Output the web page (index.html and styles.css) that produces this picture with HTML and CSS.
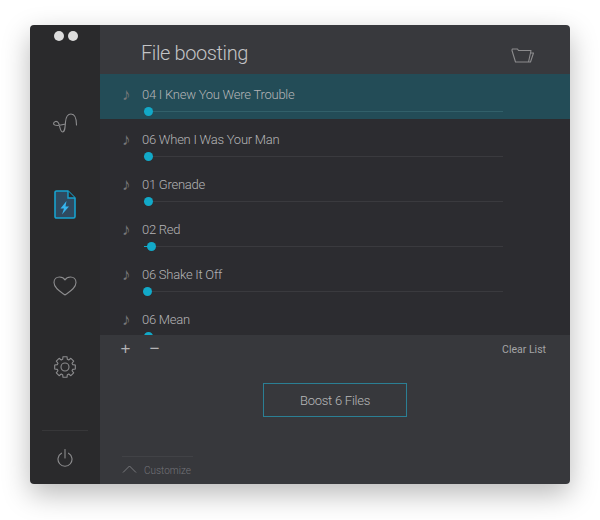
FILE: index.html
```html
<!DOCTYPE html>
<html lang="en">
<head>
    <meta charset="UTF-8">
    <title>File boosting</title>
    <link rel="stylesheet" href="styles.css">
</head>
<body>
    <div class="window">
        <aside class="sidebar">
            <div class="dots"><span class="dot"></span><span class="dot"></span></div>
            <nav class="nav">
                <div class="nav-item">
                    <svg class="icon" width="26" height="22" viewBox="0 0 26 22"><path d="M1.5 11C1.5 8 5 7.5 6.5 10C8 13 8 19 10.5 19C13 19 13 15 13.5 9C14 3 16 1 19 1C22.5 1 24.5 5 24.5 12M1.5 11C3 13.5 8 12.5 13.5 11"/></svg>
                </div>
                <div class="nav-item">
                    <svg class="doc" width="22" height="29" viewBox="0 0 22 29">
                        <path class="doc-body" d="M2.5 1H14L21 8V26.5C21 27.4 20.4 28 19.5 28H2.5C1.6 28 1 27.4 1 26.5V2.5C1 1.6 1.6 1 2.5 1Z"/>
                        <path class="doc-fold" d="M14 1V8H21"/>
                        <path class="doc-bolt" d="M12.5 11L6.5 18.5H10L8 24.5L15 16.5H11.5Z"/>
                    </svg>
                </div>
                <div class="nav-item">
                    <svg class="icon" width="24" height="20" viewBox="0 0 24 20"><path d="M12 19C7 15.5 1 12 1 6.5C1 3 3.5 1 6.5 1C9 1 11 2.2 12 4C13 2.2 15 1 17.5 1C20.5 1 23 3 23 6.5C23 12 17 15.5 12 19Z"/></svg>
                </div>
                <div class="nav-item">
                    <svg class="icon" width="22" height="22" viewBox="-11 -11 22 22">
                        <path d="M7.65-2.34L10.31-2V2L7.65 2.34L7.06 3.75L8.7 5.88L5.88 8.7L3.75 7.06L2.34 7.65L2 10.31H-2L-2.34 7.65L-3.75 7.06L-5.88 8.7L-8.7 5.88L-7.06 3.75L-7.65 2.34L-10.31 2V-2L-7.65-2.34L-7.06-3.75L-8.7-5.88L-5.88-8.7L-3.75-7.06L-2.34-7.65L-2-10.31H2L2.34-7.65L3.75-7.06L5.88-8.7L8.7-5.88L7.06-3.75Z"/>
                        <circle r="4"/>
                    </svg>
                </div>
            </nav>
            <div class="power">
                <svg class="icon" width="16" height="18" viewBox="0 0 16 18"><path d="M4.5 4.2A7 7 0 1 0 11.5 4.2M8 .5V9"/></svg>
            </div>
        </aside>

        <main class="content">
            <header class="header">
                <h1>File boosting</h1>
                <svg class="icon folder" width="23" height="15" viewBox="0 0 23 15"><path d="M1 2.5L1.2 1H6.5L7.5 2.5H20L19.5 5M1 2.5L4.5 14H19.5L22.5 5H19.5L17.5 14"/></svg>
            </header>

            <ul class="tracks">
                <li class="track selected">
                    <div class="track-title"><span class="note">♪</span>04 I Knew You Were Trouble</div>
                    <div class="slider"><span class="fill" style="width: 5px"></span></div>
                </li>
                <li class="track">
                    <div class="track-title"><span class="note">♪</span>06 When I Was Your Man</div>
                    <div class="slider"><span class="fill" style="width: 5px"></span></div>
                </li>
                <li class="track">
                    <div class="track-title"><span class="note">♪</span>01 Grenade</div>
                    <div class="slider"><span class="fill" style="width: 5px"></span></div>
                </li>
                <li class="track">
                    <div class="track-title"><span class="note">♪</span>02 Red</div>
                    <div class="slider"><span class="fill" style="width: 8px"></span></div>
                </li>
                <li class="track">
                    <div class="track-title"><span class="note">♪</span>06 Shake It Off</div>
                    <div class="slider"><span class="fill" style="width: 4px"></span></div>
                </li>
                <li class="track">
                    <div class="track-title"><span class="note">♪</span>06 Mean</div>
                    <div class="slider"><span class="fill" style="width: 5px"></span></div>
                </li>
            </ul>

            <section class="bottom">
                <div class="toolbar">
                    <div class="toolbar-left"><span class="tool">+</span><span class="tool">−</span></div>
                    <span class="clear">Clear List</span>
                </div>
                <div class="boost-wrap"><button class="boost">Boost 6 Files</button></div>
                <div class="customize">
                    <svg class="chevron" width="15" height="8" viewBox="0 0 15 8"><path d="M1 7.5L7.5 1L14 7.5"/></svg>
                    <span>Customize</span>
                </div>
            </section>
        </main>
    </div>
</body>
</html>
```

FILE: styles.css
```css
html, body {
    height: 100%;
    overflow: hidden;
}
body {
    margin: 0;
    background: #fff;
    font-family: Roboto, "Liberation Sans", sans-serif;
    font-weight: 300;
}
.window {
    display: flex;
    width: 540px;
    height: 459px;
    margin: 25px 0 0 30px;
    border-radius: 4px;
    overflow: hidden;
    box-shadow: 0 10px 28px rgba(0,0,0,0.28);
}

/* sidebar */
.sidebar {
    display: flex;
    flex-direction: column;
    flex: 0 0 70px;
    background: #2a2a2c;
}
.dots {
    display: flex;
    justify-content: center;
    gap: 4px;
    height: 58px;
    padding: 6px 0 0 1px;
    box-sizing: border-box;
}
.dot {
    width: 10px;
    height: 10px;
    border-radius: 50%;
    background: #ddd;
}
.nav-item {
    display: flex;
    align-items: center;
    justify-content: center;
    height: 81px;
}
.icon {
    fill: none;
    stroke: #8c8c8e;
    stroke-width: 1.1;
    stroke-linejoin: round;
    stroke-linecap: round;
}
.doc-body {
    fill: #2f4a60;
    stroke: #17a2cf;
    stroke-width: 1.6;
    stroke-linejoin: round;
}
.doc-fold {
    fill: #2a2a2c;
    stroke: #17a2cf;
    stroke-width: 1.4;
}
.doc-bolt {
    fill: #35b4ee;
}
.power {
    display: flex;
    align-items: center;
    justify-content: center;
    height: 53px;
    margin: auto 12px 0;
    border-top: 1px solid #373739;
}

/* main area */
.content {
    display: flex;
    flex-direction: column;
    flex: 1;
    min-width: 0;
}
.header {
    display: flex;
    align-items: center;
    justify-content: space-between;
    flex: 0 0 49px;
    padding: 0 36px 0 41px;
    background: #38393d;
}
.header h1 {
    margin: 6px 0 0;
    font-size: 20px;
    font-weight: 300;
    letter-spacing: -0.4px;
    color: #c4c4c6;
}
.folder {
    margin-top: 12px;
}
.tracks {
    flex: 0 0 261px;
    margin: 0;
    padding: 0;
    list-style: none;
    overflow: hidden;
    background: #2c2c30;
}
.track {
    height: 45px;
    padding: 13px 0 0 42px;
    box-sizing: border-box;
}
.track.selected {
    background: #234c57;
}
.track-title {
    position: relative;
    height: 16px;
    font-size: 13px;
    line-height: 16px;
    letter-spacing: -0.25px;
    color: #b4b4b6;
    white-space: nowrap;
}
.note {
    position: absolute;
    left: -20px;
    top: -1px;
    font-family: "DejaVu Sans", sans-serif;
    font-size: 17px;
    letter-spacing: 0;
    color: #77777a;
}
.slider {
    position: relative;
    width: 359px;
    height: 1px;
    margin: 8px 0 0 2px;
    background: #3a3a3e;
}
.selected .slider {
    background: #32606a;
}
.fill {
    position: absolute;
    left: 0;
    top: 0;
    height: 1px;
    background: #12a9c8;
}
.fill::after {
    content: "";
    position: absolute;
    right: -4px;
    top: -4px;
    width: 9px;
    height: 9px;
    border-radius: 50%;
    background: #12a9c8;
}

/* bottom panel */
.bottom {
    display: flex;
    flex-direction: column;
    flex: 1;
    background: #37383c;
}
.toolbar {
    display: flex;
    align-items: center;
    justify-content: space-between;
    height: 28px;
    padding: 0 24px 0 20px;
}
.toolbar-left {
    display: flex;
    gap: 18px;
}
.tool {
    width: 11px;
    font-family: "Liberation Sans", sans-serif;
    font-size: 17px;
    font-weight: 400;
    line-height: 18px;
    text-align: center;
    color: #b4b4b6;
}
.clear {
    font-size: 10.5px;
    font-weight: 400;
    color: #a4a4a6;
}
.boost-wrap {
    display: flex;
    justify-content: center;
    padding-top: 20px;
}
.boost {
    width: 144px;
    height: 34px;
    padding: 0;
    background: transparent;
    border: 1px solid #2b7f94;
    font-family: inherit;
    font-size: 13px;
    font-weight: 300;
    letter-spacing: -0.25px;
    color: #b8b8ba;
}
.customize {
    display: flex;
    align-items: center;
    gap: 7px;
    width: 71px;
    height: 27px;
    margin: auto 0 0 22px;
    border-top: 1px solid #414246;
    font-size: 10px;
    color: #74747a;
    white-space: nowrap;
}
.chevron {
    flex: none;
    margin-top: -3px;
    fill: none;
    stroke: #78787c;
    stroke-width: 1;
}
```
